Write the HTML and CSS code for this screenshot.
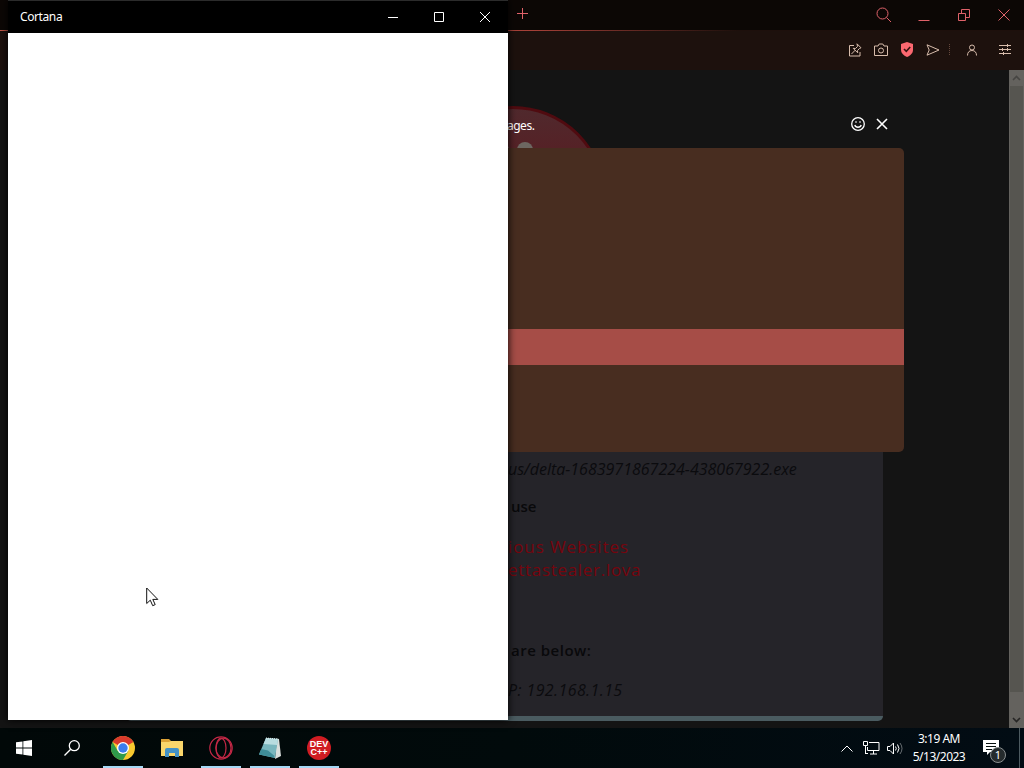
FILE: index.html
```html
<!DOCTYPE html>
<html lang="en">
<head>
  <meta charset="UTF-8" />
  <title>Desktop</title>
  <link rel="stylesheet" href="styles.css">
</head>
<body>
  <div class="desktop">

    <div class="browser">
      <div class="tabbar">
        <svg class="newtab" width="11" height="11" viewBox="0 0 11 11"><path d="M5.500 0v11M0 5.500h11"/></svg>
        <div class="window-buttons">
          <svg width="16" height="16" viewBox="0 0 16 16"><circle cx="6.500" cy="6.500" r="5.500"/><path d="M10.500 10.500l4.500 4.500"/></svg>
          <svg width="12" height="12" viewBox="0 0 12 12"><path d="M.5 11.500h11"/></svg>
          <svg width="12" height="12" viewBox="0 0 12 12"><path d="M.5 4.500h7v7h-7zM3.500 4.500v-4h8v8h-4"/></svg>
          <svg width="12" height="12" viewBox="0 0 12 12"><path d="M.5.5l11 11M11.500.5l-11 11"/></svg>
        </div>
      </div>

      <div class="toolbar">
        <svg width="14" height="14" viewBox="0 0 14 14"><path d="M6 2.500H1.500v10.500h10.500V9M9 .8l4 4-1.500.7-2 2 .2 2.300-4.500-4.500 2.300.2 2-2zM7.200 7.200L3.500 11"/></svg>
        <svg width="14" height="14" viewBox="0 0 14 14"><path d="M.5 3H4l1.200-2h3.600L10 3h3.500v9.500H.5z"/><circle cx="7" cy="7.500" r="2.500"/></svg>
        <svg class="shield" width="14" height="15" viewBox="0 0 14 15"><path class="body" d="M7 0l6 2v6c0 3-2.500 5.500-6 7-3.500-1.500-6-4-6-7V2z"/><path class="tick" d="M4 7l2.300 2.300L10.200 5"/></svg>
        <svg width="14" height="12" viewBox="0 0 14 12"><path d="M1 .8L13 6 1 11.200 3.200 6z"/></svg>
        <span class="dots"></span>
        <svg class="user" width="12" height="12" viewBox="0 0 12 12"><circle cx="6" cy="3.500" r="2.500"/><path d="M1.500 11.500c0-3 1.500-5 4.500-5s4.500 2 4.500 5"/></svg>
        <svg width="12" height="12" viewBox="0 0 12 12"><path d="M0 1.500h12M0 5.500h12M0 9.500h12M8.500 0v3M3.500 4v3M8.500 4v3M4.500 8v3"/></svg>
      </div>

      <div class="page">
        <div class="view">
          <div class="virus"><i></i><i></i></div>
          <div class="popup">
            <div class="popup-head">
              <span class="msg">ages.</span>
              <svg width="14" height="14" viewBox="0 0 14 14"><circle cx="7" cy="7" r="6.300"/><path d="M5 4.200v1.600M9 4.200v1.600M3.800 8c.8 3 5.600 3 6.400 0"/></svg>
              <svg class="close" width="12" height="12" viewBox="0 0 12 12"><path d="M1 1l10 10M11 1L1 11"/></svg>
            </div>
            <div class="popup-body">
              <div class="popup-row"></div>
            </div>
          </div>
          <div class="card">
            <p class="path">us/delta-1683971867224-438067922.exe</p>
            <p class="use">use</p>
            <p class="bad">ious Websites</p>
            <p class="bad second">ettastealer.lova</p>
            <p class="below">are below:</p>
            <p class="ip">P: 192.168.1.15</p>
          </div>
        </div>
        <div class="scrollbar">
          <svg width="9" height="6" viewBox="0 0 9 6"><path d="M1 5l3.500-3.500L8 5"/></svg>
          <div class="thumb"></div>
          <svg class="down" width="9" height="6" viewBox="0 0 9 6"><path d="M1 1l3.500 3.500L8 1"/></svg>
        </div>
      </div>
    </div>

    <div class="cortana">
      <div class="cortana-title">
        <span>Cortana</span>
        <svg width="10" height="10" viewBox="0 0 10 10"><path d="M0 5.500h10"/></svg>
        <svg width="10" height="10" viewBox="0 0 10 10"><path d="M.5.5h9v9h-9z"/></svg>
        <svg width="10" height="10" viewBox="0 0 10 10"><path d="M0 0l10 10M10 0L0 10"/></svg>
      </div>
      <div class="cortana-body"></div>
    </div>

    <div class="taskbar">
      <div class="task start">
        <svg width="16" height="16" viewBox="0 0 16 16"><path fill="#fff" d="M0 2.300l6.500-.9v6.200H0zM7.300 1.300L16 0v7.600H7.300zM0 8.400h6.500v6.200L0 13.700zM7.300 8.400H16V16l-8.700-1.300z"/></svg>
      </div>
      <div class="task search">
        <svg width="16" height="16" viewBox="0 0 16 16"><g fill="none" stroke="#fff" stroke-width="1.300"><circle cx="10.300" cy="5.700" r="5"/><path d="M6.700 9.300L.5 15.500"/></g></svg>
      </div>
      <div class="task open">
        <svg width="24" height="24" viewBox="0 0 24 24">
          <circle cx="12" cy="12" r="12" fill="#f9c92f"/>
          <path fill="#d93a2c" d="M12 12L1.600 6A12 12 0 0 1 22.400 6z"/>
          <path fill="#2f9a4b" d="M1.600 6A12 12 0 0 0 12 24l5.200-9L12 12l-5.200 3z"/>
          <circle cx="12" cy="12" r="6" fill="#fff"/>
          <circle cx="12" cy="12" r="4.700" fill="#3b7ded"/>
        </svg>
      </div>
      <div class="task">
        <svg width="22" height="20" viewBox="0 0 22 20"><path fill="#dda336" d="M0 1h8l2 2h11v5H0z"/><path fill="#fad66b" d="M0 4h8l2-1h12v15H0z"/><path fill="#4492c6" d="M4 19v-7q0-2 2-2h10q2 0 2 2v7h-4v-4H8v4z"/></svg>
      </div>
      <div class="task open">
        <svg width="24" height="24" viewBox="0 0 24 24"><g fill="none" stroke="#c32846" stroke-width="1.200"><circle cx="12" cy="12" r="11.200"/><ellipse cx="12" cy="12" rx="5" ry="9.800"/><ellipse cx="14.500" cy="12" rx="7.500" ry="9.800"/></g></svg>
      </div>
      <div class="task open notes">
        <svg width="22" height="22" viewBox="0 0 22 22"><path fill="#d9dedc" d="M18 1.500l2 .5 2 17-6 3z"/><path fill="#79b6be" d="M7 1l12 1-3 19L0 17.500z"/><path fill="#b8dce0" d="M7 1l12 1-1 6L4.500 7z"/><path fill="#3f8d99" d="M2.200 12L9 13.500 15.500 19l-.5 1.800L0 17.500z"/><path stroke="#e8f4f4" stroke-dasharray="1 1" d="M7 1l12 1"/></svg>
      </div>
      <div class="task open">
        <div class="dev">DEV<br>C++</div>
      </div>

      <div class="tray">
        <svg width="12" height="7" viewBox="0 0 12 7"><path d="M.5 6.500L6 1l5.500 5.500"/></svg>
        <svg class="net" width="17" height="14" viewBox="0 0 17 14"><path d="M6 1.500h10v8H4.500V6M.5.5h4v4h-4zM2.500 4.500v8M10.500 9.500v3.500M7 13h7M2 12.500h3"/></svg>
        <svg class="sound" width="16" height="13" viewBox="0 0 16 13"><path d="M.5 4.500h2.500L6.500 1v11L3 8.500H.5zM8.500 4.500q1.500 2 0 4M10.500 2.500q3 4 0 8"/><path opacity=".4" d="M13 1q4 5.500 0 11"/></svg>
        <div class="clock">3:19 AM<br>5/13/2023</div>
        <div class="notif">
          <svg width="16" height="16" viewBox="0 0 16 16"><path class="bubble" d="M0 0h16v12H7l-3 3v-3H0z"/><path class="lines" d="M3 3.500h10M3 6.500h10M3 9.500h6"/></svg>
          <span class="badge">1</span>
        </div>
      </div>
    </div>

    <svg class="cursor" width="13" height="20" viewBox="0 0 13 20"><path d="M.7 1v15.500l3.600-3.300 2.400 5.500 2.500-1.100-2.400-5.200h5z"/></svg>
  </div>
</body>
</html>
```
FILE: styles.css
```css
* {
  margin: 0;
  padding: 0;
  box-sizing: border-box;
}

body {
  background: #141414;
  font-family: "Noto Sans", "Open Sans", sans-serif;
  overflow: hidden;
}

svg {
  display: block;
  flex: none;
  fill: none;
}

.desktop {
  position: relative;
  width: 1024px;
  height: 768px;
  overflow: hidden;
  display: flex;
  flex-direction: column;
}

/* browser */
.browser {
  height: 728px;
  display: flex;
  flex-direction: column;
}

.tabbar {
  height: 31px;
  background: #0c0705;
  border-bottom: 1px solid;
  border-image: linear-gradient(90deg, #c85848 0, #a54037 52%, #1e100c 72%) 1;
  display: flex;
  justify-content: space-between;
  padding: 8px 14px 0 517px;
}

.tabbar svg {
  stroke: #e0626a;
}

.window-buttons {
  display: flex;
  width: 134px;
  justify-content: space-between;
}

.window-buttons svg {
  margin-top: 1px;
}

.window-buttons svg:first-child {
  margin-top: -1px;
  margin-right: -2px;
}

.toolbar {
  height: 39px;
  background: #1d110d;
  display: flex;
  align-items: center;
  justify-content: flex-end;
  padding: 0 13px 2px 0;
  gap: 12px;
}

.toolbar svg {
  stroke: #d8bdac;
}

.toolbar .shield {
  stroke: none;
}

.shield .body {
  fill: #fb6870;
}

.toolbar .tick {
  stroke: #35130f;
  stroke-width: 1.6;
}

.dots {
  height: 11px;
  border-left: 1px dotted #65483c;
  margin-left: -3px;
}

.user {
  margin-right: 9px;
  margin-left: 4px;
}

.page {
  flex: 1;
  display: flex;
  background: #141414;
}

.view {
  position: relative;
  width: 1009px;
  height: 658px;
}

.virus {
  position: absolute;
  left: 420px;
  top: 36px;
  width: 186px;
  height: 186px;
  border-radius: 50%;
  border: 3px solid #500b10;
  background: linear-gradient(#50292d, #571f24 30%, #551c20);
  display: flex;
  gap: 8px;
  padding: 33px 0 0 70px;
}

.virus i {
  width: 16px;
  height: 16px;
  border-radius: 50%;
  background: #6d6761;
}

.popup {
  position: absolute;
  left: 104px;
  top: 30px;
  width: 800px;
}

.popup-head {
  height: 48px;
  display: flex;
  align-items: center;
  justify-content: flex-end;
  gap: 11px;
  padding-right: 16px;
}

.msg {
  flex: 1;
  padding-left: 403px;
  font-size: 12px;
  letter-spacing: -0.5px;
  color: #fff;
  padding-top: 2px;
}

.popup-head svg {
  stroke: #fff;
  stroke-width: 1.3;
}

.popup-head .close {
  stroke-width: 1.6;
}

.popup-body {
  height: 304px;
  padding-top: 181px;
  background: #482d20;
  border-radius: 5px;
}

.popup-row {
  height: 36px;
  background: #a64d47;
}

.card {
  width: 757px;
  height: 271px;
  margin: 380px 0 0 126px;
  padding: 9px 0 0 382px;
  background: #252429;
  border-bottom: 5px solid #4a5b60;
  border-radius: 0 0 5px 5px;
  color: #09090b;
  font-family: "Open Sans", "Noto Sans", sans-serif;
  font-size: 16px;
  line-height: 20px;
  white-space: nowrap;
}

.path,
.ip {
  font-style: italic;
  color: #0b0b0e;
}

.use {
  margin: 17px 0 0 3px;
  font-weight: 600;
  font-size: 15px;
}

.bad {
  margin-top: 21px;
  color: #76050e;
  font-size: 17px;
  letter-spacing: 0.9px;
}

.bad.second {
  margin-top: 3px;
  letter-spacing: 0.7px;
}

.below {
  margin: 60px 0 0 3px;
  font-weight: 600;
  font-size: 15px;
  letter-spacing: 0.5px;
}

.ip {
  margin-top: 20px;
  letter-spacing: 0.4px;
}

.scrollbar {
  width: 15px;
  background: #64625e;
  display: flex;
  flex-direction: column;
  align-items: center;
  padding: 5px 0;
}

.scrollbar svg {
  stroke: #464542;
  stroke-width: 1.6;
}

.scrollbar .down {
  stroke: #262524;
}

.thumb {
  width: 13px;
  height: 606px;
  margin: 5px 0 25px;
  background: #565550;
}

/* cortana window */
.cortana {
  position: absolute;
  left: 8px;
  top: 0;
  width: 500px;
  height: 720px;
  display: flex;
  flex-direction: column;
  box-shadow: 0 0 8px #000;
}

.cortana-title {
  height: 33px;
  background: #000;
  border-top: 1px solid #2b2b2b;
  color: #fff;
  font-size: 12px;
  letter-spacing: -0.4px;
  display: flex;
  align-items: center;
  gap: 36px;
  padding: 0 18px 0 12px;
}

.cortana-title span {
  flex: 1;
  margin-top: -1px;
}

.cortana-title svg {
  stroke: #fff;
}

.cortana-body {
  flex: 1;
  background: #fff;
}

/* taskbar */
.taskbar {
  height: 40px;
  background: linear-gradient(90deg, #010808, #010a0b 50%, #020c14);
  display: flex;
  gap: 9px;
}

.task {
  width: 40px;
  display: flex;
  align-items: center;
  justify-content: center;
  border-bottom: 2px solid transparent;
  padding-top: 2px;
}

.task.start {
  margin-left: 4px;
  margin-right: -1px;
}

.task.search {
  margin-right: 2px;
}

.task.open {
  border-bottom-color: #a5d8f5;
}

.dev {
  width: 24px;
  height: 24px;
  border-radius: 50%;
  background: #d01c22;
  color: #fff;
  font: bold 9px/8px "Liberation Sans", sans-serif;
  text-align: center;
  padding-top: 4px;
}

.tray {
  margin-left: auto;
  display: flex;
  align-items: center;
  color: #fff;
}

.tray svg {
  stroke: #fff;
}

.net {
  margin-left: 10px;
}

.sound {
  margin-left: 7px;
}

.clock {
  width: 62px;
  margin-left: 5px;
  font-size: 12px;
  line-height: 18px;
  letter-spacing: -0.5px;
  text-align: center;
}

.notif {
  position: relative;
  margin-left: 13px;
  padding-right: 20px;
  border-right: 1px solid #4d5a60;
  margin-right: 4px;
  height: 40px;
  padding-top: 12px;
}

.tray .bubble {
  fill: #fff;
  stroke: none;
}

.tray .lines {
  stroke: #07100f;
}

.badge {
  position: absolute;
  left: 7px;
  top: 19px;
  width: 16px;
  height: 16px;
  border-radius: 50%;
  border: 1px solid #8a8f90;
  background: #252b2d;
  font-size: 11px;
  line-height: 14px;
  text-align: center;
}

.cursor {
  position: absolute;
  left: 146px;
  top: 587px;
  fill: #fff;
  stroke: #111;
}
```
